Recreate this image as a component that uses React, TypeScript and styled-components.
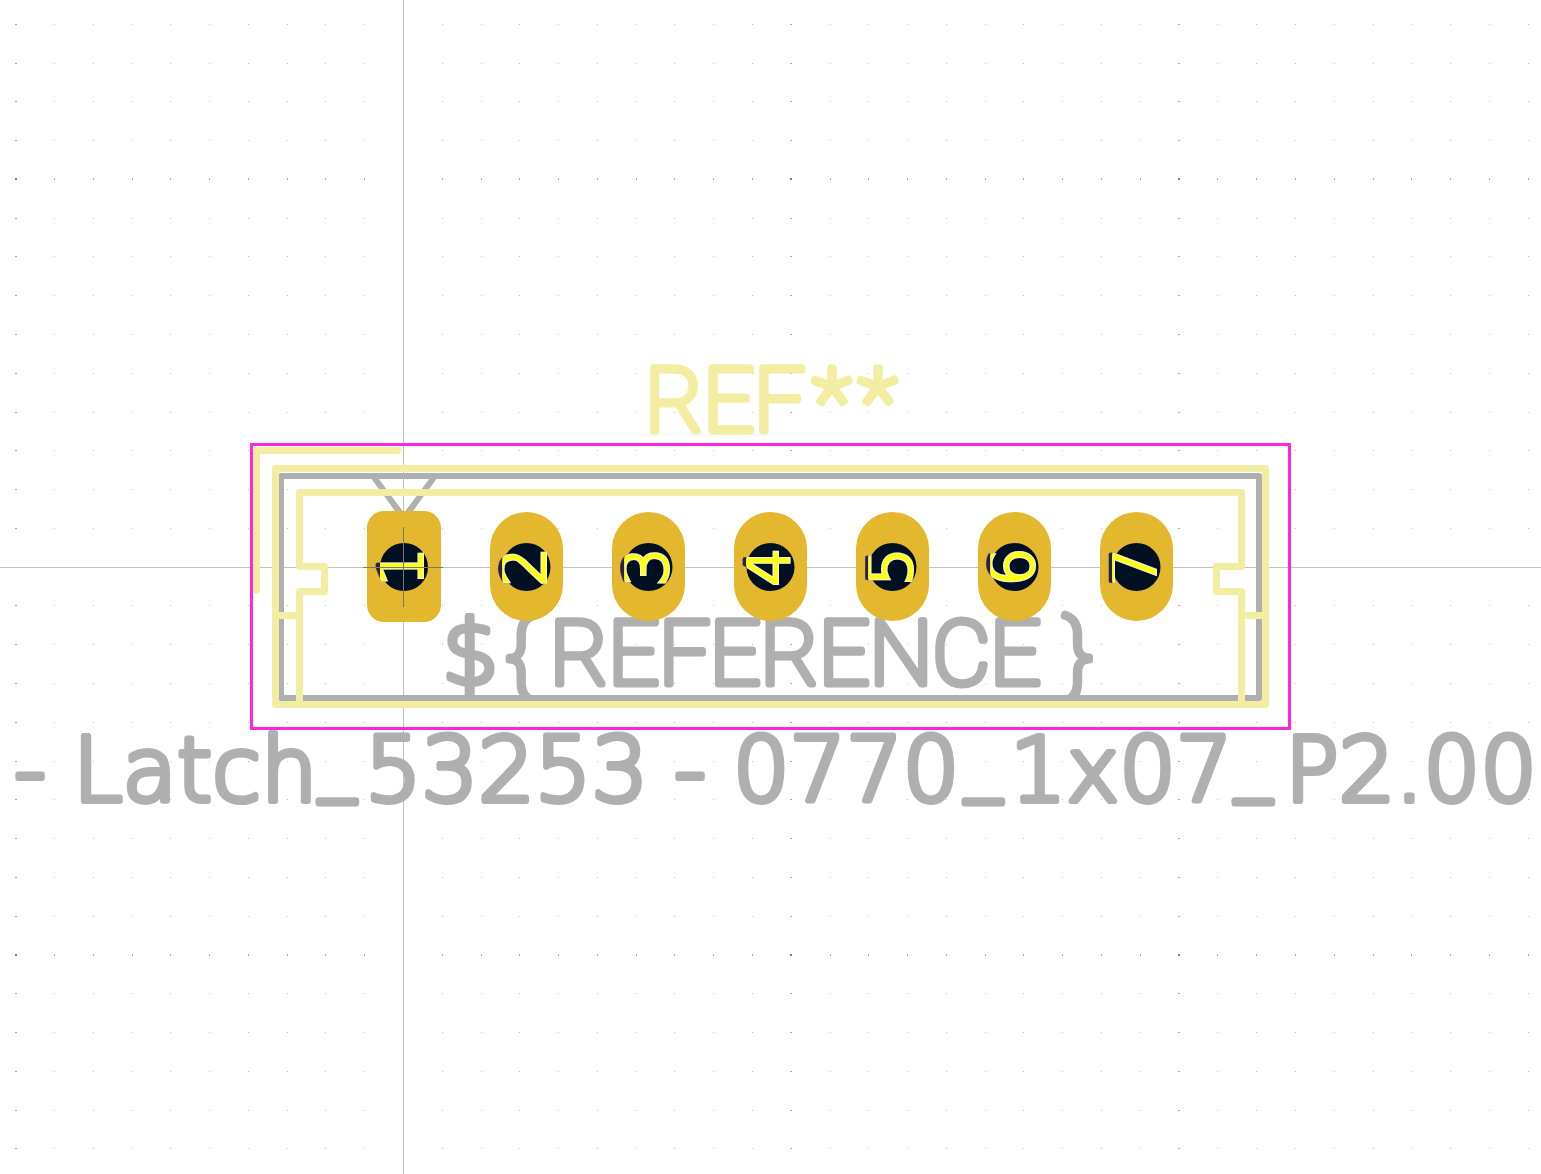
import React from "react";
import styled, { createGlobalStyle } from "styled-components";

const color = {
  background: "#ffffff",
  gridMinor: "#c2c2c2",
  gridMid: "#a8a8ac",
  gridMajor: "#808080",
  axis: "#c2c2c2",
  cross: "#7c776c",
  fab: "#afafaf",
  silk: "#f2eda1",
  courtyard: "#ff26e2",
  pad: "#e3b72e",
  hole: "#001023",
  number: "#ffff14",
  numberEdge: "#f2f2dc",
  shadow: "#2b2233",
  shadowEdge: "#5a3cc8",
};

const GlobalStyle = createGlobalStyle`
  html, body, #root { height: 100%; }
  body { margin: 0; overflow: hidden; background: ${color.background}; }
`;

const Editor = styled.main`
  display: flex;
  height: 100%;
`;

const Canvas = styled.svg`
  flex: 1;
  min-width: 0;
  height: 100%;
  display: block;
`;

const GridDot = styled.rect<{ $level: number }>`
  fill: ${(p) => [color.gridMinor, color.gridMid, color.gridMajor][p.$level]};
  shape-rendering: crispEdges;
`;

const Axis = styled.path`
  stroke: ${color.axis};
  stroke-width: 1px;
  shape-rendering: crispEdges;
`;

const OriginCross = styled(Axis)`
  stroke: ${color.cross};
`;

const Trace = styled.path<{ $layer: "fab" | "silk" }>`
  fill: none;
  stroke: ${(p) => color[p.$layer]};
  stroke-width: ${(p) => (p.$layer === "silk" ? 7 : 6)}px;
  stroke-linecap: round;
  stroke-linejoin: round;
`;

const Courtyard = styled.rect`
  fill: none;
  stroke: ${color.courtyard};
  stroke-width: 3px;
  shape-rendering: crispEdges;
`;

const PadShape = styled.rect`
  fill: ${color.pad};
`;

const Hole = styled.circle`
  fill: ${color.hole};
`;

const Label = styled.text<{ $layer: "fab" | "silk" }>`
  font-size: 89px;
  fill: ${(p) => color[p.$layer]};
  stroke: ${(p) => color[p.$layer]};
  stroke-linecap: round;
  stroke-linejoin: round;
`;

const Run = styled.tspan<{ $narrow?: boolean }>`
  font-family: ${(p) => (p.$narrow ? "Roboto" : '"DejaVu Sans"')}, sans-serif;
  font-weight: ${(p) => (p.$narrow ? 100 : 200)};
  stroke-width: ${(p) => (p.$narrow ? 7 : 6)}px;
`;

const PadNumber = styled.text`
  font-family: "DejaVu Sans", sans-serif;
  font-weight: 200;
  font-size: 60px;
  text-anchor: middle;
  stroke-linejoin: miter;
  fill: ${color.number};
  stroke: ${color.number};
  stroke-width: 2px;
`;

const DigitShadow = styled(PadNumber)`
  fill: ${color.shadow};
  stroke: ${color.shadowEdge};
  stroke-width: 4px;
  stroke-linejoin: round;
`;

const DigitShadowCore = styled(PadNumber)`
  fill: ${color.shadow};
  stroke: ${color.shadow};
  stroke-width: 3px;
  stroke-linejoin: round;
`;

const DigitEdge = styled(PadNumber)`
  fill: ${color.numberEdge};
  stroke: ${color.numberEdge};
  stroke-width: 4px;
`;

type RunData = { x: number; text: string; narrow?: boolean };

const silkLabel: RunData[] = [
  { x: 645, text: "REF", narrow: true },
  { x: 813, text: "*", narrow: true },
  { x: 859, text: "*", narrow: true },
];

const referenceLabel: RunData[] = [
  { x: 442, text: "$" },
  { x: 506, text: "{", narrow: true },
  { x: 550, text: "REFERENCE", narrow: true },
  { x: 1064, text: "}", narrow: true },
];

const valueLabel: RunData[] = [
  { x: 14, text: "-" },
  { x: 73, text: "Latch" },
  { x: 319, text: "_", narrow: true },
  { x: 365, text: "53253" },
  { x: 674, text: "-" },
  { x: 733, text: "0770" },
  { x: 965, text: "_", narrow: true },
  { x: 1010, text: "1x07" },
  { x: 1235, text: "_", narrow: true },
  { x: 1285, text: "P2.00" },
];

const origin = { x: 403.5, y: 567.2 };
const pitch = 38.78;

function Grid() {
  const dots: React.ReactElement[] = [];
  for (let j = -14; j <= 15; j++) {
    for (let i = -10; i <= 29; i++) {
      if (i === 0 || j === 0) continue;
      const bigX = i % 10 === 0;
      const bigY = j % 10 === 0;
      const x = origin.x + i * pitch;
      const y = origin.y + j * pitch;
      dots.push(
        <GridDot
          key={`${i},${j}`}
          x={bigX ? Math.round(x) - 1 : Math.floor(x)}
          y={bigY ? Math.round(y) - 1 : Math.floor(y)}
          width={bigX ? 2 : 1}
          height={bigY ? 2 : 1}
          $level={Number(bigX) + Number(bigY)}
        />
      );
    }
  }
  return <g>{dots}</g>;
}

function LayerText({ y, runs, layer }: { y: number; runs: RunData[]; layer: "fab" | "silk" }) {
  return (
    <Label $layer={layer} y={y}>
      {runs.map((r) => (
        <Run key={r.x} x={r.x} $narrow={r.narrow}>
          {r.text}
        </Run>
      ))}
    </Label>
  );
}

function Pad({ n }: { n: number }) {
  const cx = 404 + (n - 1) * 122 + (n > 1 ? 0.5 : 0);
  const turn = `translate(${cx + 18} 567) rotate(-90)`;
  return (
    <g>
      {n === 1 ? (
        <PadShape x={367} y={511} width={74} height={111} rx={17} />
      ) : (
        <PadShape x={cx - 36.5} y={512} width={73} height={109} rx={36.5} />
      )}
      <Hole cx={cx} cy={567} r={24} />
      <clipPath id={`hole-${n}`}>
        <rect x={cx - 24} y={530} width={60} height={74} />
      </clipPath>
      <g aria-hidden="true">
        <DigitShadow transform={turn}>{n}</DigitShadow>
        <DigitShadowCore transform={turn}>{n}</DigitShadowCore>
      </g>
      <g clipPath={`url(#hole-${n})`}>
        <DigitEdge aria-hidden="true" transform={turn}>
          {n}
        </DigitEdge>
        <PadNumber transform={turn}>{n}</PadNumber>
      </g>
    </g>
  );
}

export default function App() {
  return (
    <Editor>
      <GlobalStyle />
      <Canvas viewBox="0 0 1541 1174" preserveAspectRatio="xMidYMid slice">
        <Grid />
        <Axis d="M403.5 0V1174M0 567.5H1541" />

        <LayerText y={684} runs={referenceLabel} layer="fab" />
        <LayerText y={801} runs={valueLabel} layer="fab" />
        <Trace $layer="fab" d="M281 476H1259V698H281Z" />
        <Trace $layer="fab" d="M373 476L404 518L435 476" />

        <LayerText y={431} runs={silkLabel} layer="silk" />
        <Trace $layer="silk" d="M256.5 590V450.5H397.5" />
        <Trace $layer="silk" d="M275.5 468.5H1265.5V704.5H275.5Z" />
        <Trace
          $layer="silk"
          d="M299.5 704.5V591.5H324.5V566.5H299.5V492.5H1241.5V566.5H1216.5V591.5H1241.5V704.5"
        />
        <Trace $layer="silk" d="M275.5 615.5H299.5M1241.5 615.5H1265.5" />
        <Courtyard x={251.5} y={444.5} width={1038} height={284} />

        {[1, 2, 3, 4, 5, 6, 7].map((n) => (
          <Pad key={n} n={n} />
        ))}
        <OriginCross d="M403.5 527V607M363 567.5H443" />
      </Canvas>
    </Editor>
  );
}
